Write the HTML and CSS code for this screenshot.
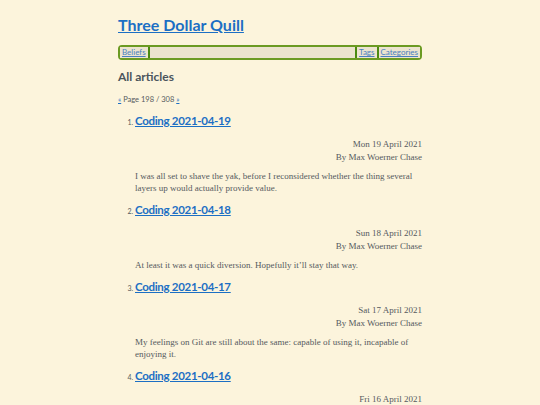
FILE: index.html
```html
<!DOCTYPE html>
<html lang="en">
<head>
<meta charset="utf-8">
<title>Three Dollar Quill</title>
<link rel="stylesheet" href="styles.css">
</head>
<body>
<div class="page">
  <header class="site-header">
    <h1 class="site-title"><a href="#">Three Dollar Quill</a></h1>
    <nav class="nav">
      <a class="nav-link" href="#">Beliefs</a>
      <span class="nav-spacer"></span>
      <a class="nav-link" href="#">Tags</a>
      <a class="nav-link" href="#">Categories</a>
    </nav>
  </header>
  <main>
    <h2 class="section-title">All articles</h2>
    <p class="pager"><a href="#">«</a> Page 198 / 308 <a href="#">»</a></p>
    <ol class="articles">
      <li class="article">
        <h3 class="article-title"><a href="#">Coding 2021-04-19</a></h3>
        <div class="meta">
          <div>Mon 19 April 2021</div>
          <div>By Max Woerner Chase</div>
        </div>
        <p class="summary">I was all set to shave the yak, before I reconsidered whether the thing several layers up would actually provide value.</p>
      </li>
      <li class="article">
        <h3 class="article-title"><a href="#">Coding 2021-04-18</a></h3>
        <div class="meta">
          <div>Sun 18 April 2021</div>
          <div>By Max Woerner Chase</div>
        </div>
        <p class="summary">At least it was a quick diversion. Hopefully it’ll stay that way.</p>
      </li>
      <li class="article">
        <h3 class="article-title"><a href="#">Coding 2021-04-17</a></h3>
        <div class="meta">
          <div>Sat 17 April 2021</div>
          <div>By Max Woerner Chase</div>
        </div>
        <p class="summary">My feelings on Git are still about the same: capable of using it, incapable of enjoying it.</p>
      </li>
      <li class="article">
        <h3 class="article-title"><a href="#">Coding 2021-04-16</a></h3>
        <div class="meta">
          <div>Fri 16 April 2021</div>
          <div>By Max Woerner Chase</div>
        </div>
        <p class="summary">Not much today.</p>
      </li>
    </ol>
  </main>
</div>
</body>
</html>
```

FILE: styles.css
```css
html, body {
  margin: 0;
  padding: 0;
  background: #fcf4dc;
}
body {
  font-family: "Liberation Serif", "DejaVu Serif", serif;
  color: #555a5e;
  font-size: 9px;
}
.page {
  width: 304px;
  margin: 0 auto;
  padding-top: 14px;
}
a {
  color: #1c6fc4;
}
.site-title {
  font-family: Lato, "Open Sans", sans-serif;
  font-size: 16px;
  font-weight: 700;
  line-height: 22px;
  margin: 0 0 9px 0;
}
.nav {
  display: flex;
  align-items: stretch;
  border: 2px solid #6b9a22;
  border-radius: 4px;
  background: #ebe3cd;
  height: 11px;
  font-family: Lato, "Open Sans", sans-serif;
  font-size: 8px;
  line-height: 11px;
}
.nav-link {
  display: block;
  padding: 0 2px;
  color: #4a7fbf;
  background: #ece4cf;
}
.nav-link:first-child {
  border-right: 2px solid #4a8a10;
}
.nav-spacer {
  flex: 1;
  border-right: 2px solid #4a8a10;
}
.nav-link:nth-child(3) {
  border-right: 2px solid #4a8a10;
}
.section-title {
  font-family: Lato, "Open Sans", sans-serif;
  font-size: 12px;
  font-weight: 700;
  color: #4b555c;
  margin: 9px 0 0 0;
  line-height: 16px;
}
.pager {
  font-family: Lato, "Open Sans", sans-serif;
  font-size: 7.5px;
  margin: 10px 0 0 0;
  line-height: 10px;
}
.articles {
  margin: 8px 0 0 0;
  padding-left: 17px;
  font-family: Lato, "Open Sans", sans-serif;
  font-size: 7px;
}
.article-title {
  font-family: Lato, "Open Sans", sans-serif;
  font-size: 11.5px;
  font-weight: 700;
  letter-spacing: -0.3px;
  margin: 0;
  line-height: 16px;
}
.meta {
  font-family: "Liberation Serif", serif;
  text-align: right;
  font-size: 9px;
  line-height: 12.5px;
  margin-top: 9px;
}
.summary {
  font-family: "Liberation Serif", serif;
  font-size: 9px;
  line-height: 12px;
  margin: 7px 0 8px 0;
}
```
